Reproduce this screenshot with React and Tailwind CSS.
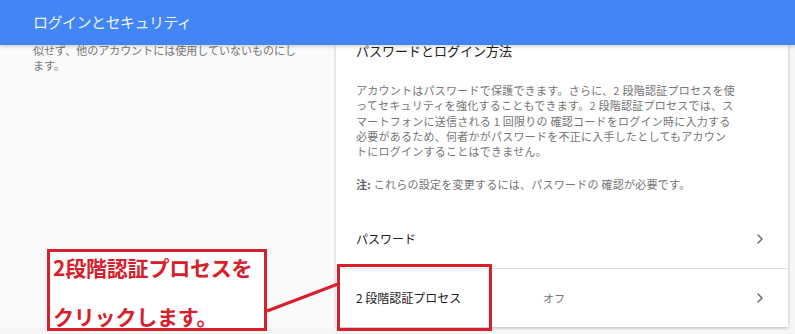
import React from 'react';

const bodyLines = [
  'アカウントはパスワードで保護できます。さらに、2 段階認証プロセスを使',
  'ってセキュリティを強化することもできます。2 段階認証プロセスでは、ス',
  'マートフォンに送信される 1 回限りの 確認コードをログイン時に入力する',
  '必要があるため、何者かがパスワードを不正に入手したとしてもアカウン',
  'トにログインすることはできません。',
];

function Chevron() {
  return (
    <svg width="8" height="12" viewBox="0 0 8 12" fill="none">
      <path d="M2 2l4 4-4 4" stroke="#6b6b6b" strokeWidth="1.5" strokeLinecap="round" strokeLinejoin="round" />
    </svg>
  );
}

function Row({ label, value, className }) {
  return (
    <div className={`flex items-center pl-[20px] pr-[24px] ${className}`}>
      <div className="w-[187px] text-[12px] text-[#212121]">{label}</div>
      <div className="flex-1 text-[11px] text-[#757575]">{value}</div>
      <Chevron />
    </div>
  );
}

export default function App() {
  return (
    <div
      className="relative w-[795px] h-[334px] overflow-hidden bg-[#f6f6f6]"
      style={{ fontFamily: '"Noto Sans CJK JP", "Noto Sans", sans-serif' }}
    >
      {/* Header */}
      <div className="relative z-10 h-[45px] bg-[#4285f4] flex items-center pl-[33px] shadow-[0_2px_3px_rgba(0,0,0,0.15)]">
        <span className="text-[15px] text-white/90 tracking-[-0.5px]">ログインとセキュリティ</span>
      </div>

      {/* Content */}
      <div className="flex -mt-[2px]">
        <div className="w-[336px] bg-[#fafafa] pl-[33px] pr-[20px] text-[11px] leading-[15px] text-[#757575]">
          <div className="whitespace-nowrap">似せず、他のアカウントには使用していないものにし</div>
          <div>ます。</div>
        </div>

        <div className="w-[452px] bg-white shadow-[0_1px_3px_rgba(0,0,0,0.25)]">
          <div className="pl-[20px] text-[13px] leading-[16px] text-[#212121]">パスワードとログイン方法</div>
          <div className="pl-[20px] mt-[24px] text-[11px] leading-[15.3px] tracking-[0.25px] text-[#757575]">
            {bodyLines.map((line) => (
              <div key={line} className="whitespace-nowrap">{line}</div>
            ))}
          </div>
          <div className="pl-[20px] mt-[18px] text-[11px] leading-[15.3px] tracking-[0.25px] text-[#757575]">
            <span className="font-bold text-[#616161]">注:</span> これらの設定を変更するには、パスワードの 確認が必要です。
          </div>
          <Row label="パスワード" value="" className="h-[58px] mt-[17px]" />
          <Row label="2 段階認証プロセス" value="オフ" className="h-[59px] border-t border-[#e0e0e0]" />
        </div>
      </div>

      {/* Annotation */}
      <div className="absolute left-[47px] top-[249px] w-[220px] h-[82px] border-[3px] border-[#d7202b] bg-white pl-[3px] pt-[3px] text-[#d7202b] font-bold text-[21px] tracking-[-0.2px]">
        <div className="leading-[24px] whitespace-nowrap">2段階認証プロセスを</div>
        <div className="leading-[24px] mt-[25px] whitespace-nowrap">クリックします。</div>
      </div>
      <div className="absolute left-[337px] top-[264px] w-[155px] h-[67px] border-[3px] border-[#d7202b]" />
      <svg className="absolute left-0 top-0" width="795" height="334">
        <line x1="267" y1="311" x2="338" y2="284" stroke="#d7202b" strokeWidth="3" />
      </svg>
    </div>
  );
}
